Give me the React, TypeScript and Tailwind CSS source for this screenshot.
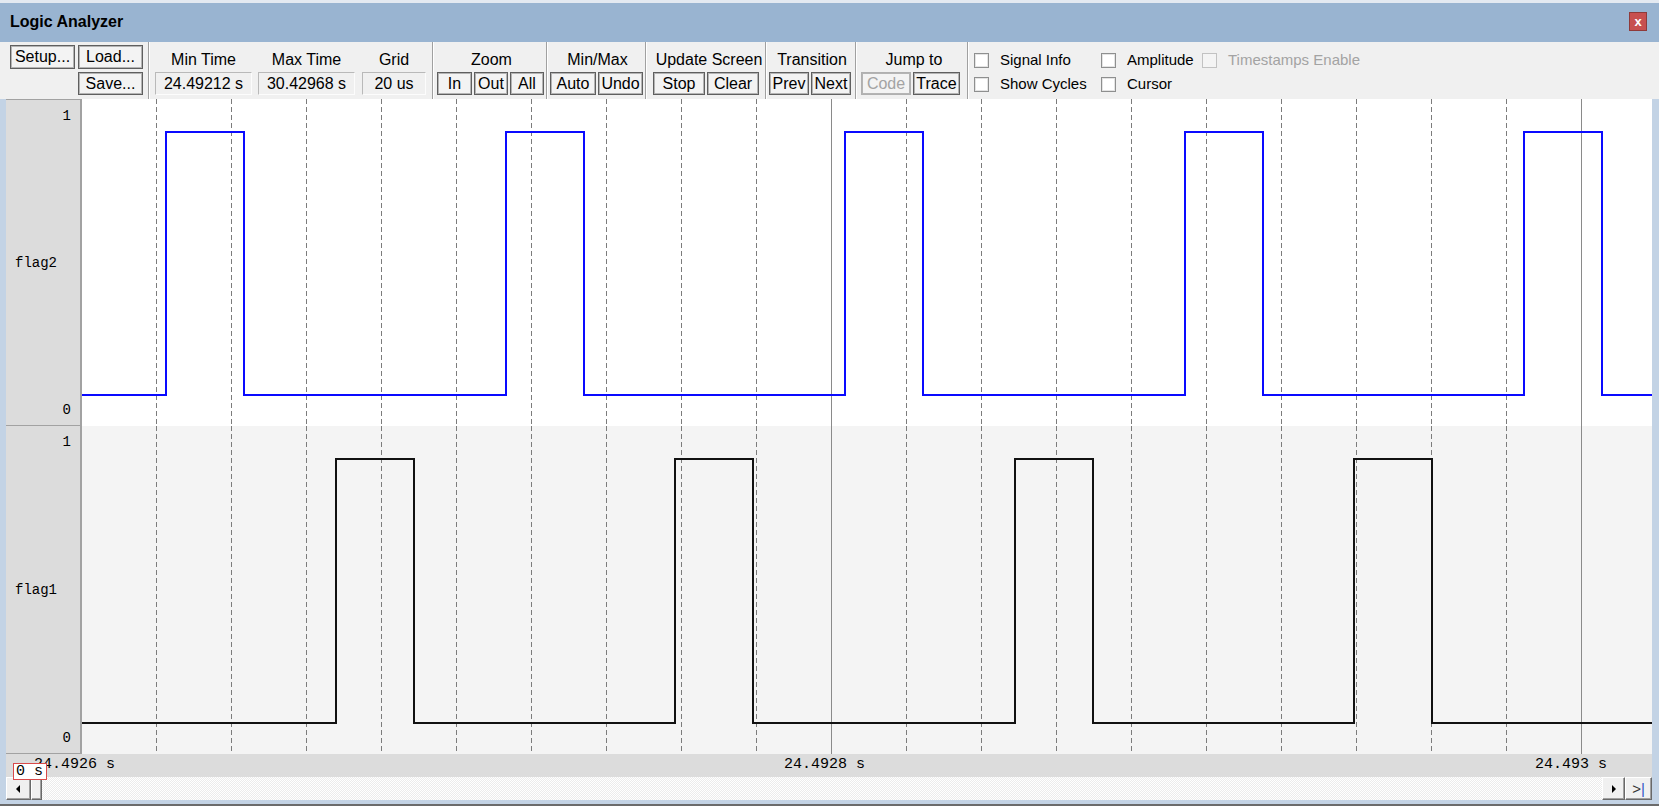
import React from "react";

const PLOT_W = 1570;
const FLAG2_H = 327;
const FLAG1_H = 328;

// grid every 20us = 75px, first line one step right of the plot's left edge
const GRID = Array.from({ length: 20 }, (_, i) => ({ x: 75 * (i + 1) - 0.5, cursor: i === 9 || i === 19 }));

function wave(rises: number[], width: number, hi: number, lo: number) {
  let d = `M0 ${lo}`;
  for (const r of rises) d += ` H${r} V${hi} H${r + width} V${lo}`;
  return d + ` H${PLOT_W}`;
}

const sans = "font-['Liberation_Sans',Arial,sans-serif]";
const mono = "font-['Liberation_Mono','Courier_New',monospace]";

const btn =
  "flex items-center justify-center bg-[#f3f3f3] border border-[#5f5f5f] shadow-[inset_0_0_0_1px_#b4b4b4] text-[16px] leading-none text-black";

function Btn({ label, w, h = 23, disabled }: { label: string; w: number; h?: number; disabled?: boolean }) {
  return (
    <div
      className={disabled ? btn.replace("border-[#5f5f5f]", "border-[#b0b0b0]") + " !text-[#a3a3a3]" : btn}
      style={{ width: w, height: h }}
    >
      {label}
    </div>
  );
}

function Sep() {
  return <div className="w-[2px] self-stretch border-l border-[#a0a0a0] border-r border-r-white" />;
}

function ValueBox({ label, value, w }: { label: string; value: string; w: number }) {
  return (
    <div className="flex flex-col items-center" style={{ width: w }}>
      <div className="h-[18px] leading-[18px] text-[16px] whitespace-nowrap">{label}</div>
      <div className="mt-[3px] h-[23px] w-full flex items-center justify-center bg-[#f0f0f0] border border-[#b9b9b9] border-b-[#fcfcfc] border-r-[#fcfcfc] text-[16px] leading-none">
        {value}
      </div>
    </div>
  );
}

function Group({ label, children, className }: { label: string; children: React.ReactNode; className?: string }) {
  return (
    <div className={"flex flex-col pt-[9px] " + (className ?? "")}>
      <div className="h-[18px] leading-[18px] text-[16px] text-center whitespace-nowrap">{label}</div>
      <div className="mt-[3px] flex gap-[2px]">{children}</div>
    </div>
  );
}

function Check({ label, disabled }: { label: string; disabled?: boolean }) {
  return (
    <div className="flex items-center h-[18px] gap-[11px] whitespace-nowrap">
      <div
        className={
          disabled
            ? "w-[15px] h-[15px] border border-[#c2c2c2] bg-[#f4f4f4]"
            : "w-[15px] h-[15px] border border-[#8e8f8f] bg-white shadow-[inset_0_0_0_1px_#e4e4e4]"
        }
      />
      <span className={"text-[15px] leading-[18px] " + (disabled ? "text-[#a3a3a3]" : "text-black")}>{label}</span>
    </div>
  );
}

function Toolbar() {
  return (
    <div className={"h-[57px] bg-[#f0f0f0] flex " + sans}>
      <div className="w-[148px] pl-[10px] pt-[3px] grid grid-cols-[65px_65px] gap-x-[3px] gap-y-[3px] content-start">
        <Btn label="Setup..." w={65} h={24} />
        <Btn label="Load..." w={65} h={24} />
        <div />
        <Btn label="Save..." w={65} />
      </div>
      <Sep />
      <div className="w-[282px] pl-[5px] pt-[9px] flex gap-[6px]">
        <ValueBox label="Min Time" value="24.49212 s" w={97} />
        <ValueBox label="Max Time" value="30.42968 s" w={97} />
        <div className="ml-[1px]">
          <ValueBox label="Grid" value="20 us" w={64} />
        </div>
      </div>
      <Sep />
      <Group label="Zoom" className="w-[112px] pl-[3px]">
        <Btn label="In" w={35} />
        <Btn label="Out" w={34} />
        <Btn label="All" w={34} />
      </Group>
      <Sep />
      <Group label="Min/Max" className="w-[97px] pl-[2px]">
        <Btn label="Auto" w={46} />
        <Btn label="Undo" w={45} />
      </Group>
      <Sep />
      <Group label="Update Screen" className="w-[118px] pl-[6px]">
        <Btn label="Stop" w={52} />
        <Btn label="Clear" w={52} />
      </Group>
      <Sep />
      <Group label="Transition" className="w-[88px] pl-[2px]">
        <Btn label="Prev" w={40} />
        <Btn label="Next" w={40} />
      </Group>
      <Sep />
      <Group label="Jump to" className="w-[110px] pl-[4px]">
        <Btn label="Code" w={50} disabled />
        <Btn label="Trace" w={47} />
      </Group>
      <Sep />
      <div className="pl-[5px] pt-[9px] grid grid-cols-[127px_101px_auto] gap-y-[6px] content-start">
        <Check label="Signal Info" />
        <Check label="Amplitude" />
        <Check label="Timestamps Enable" disabled />
        <Check label="Show Cycles" />
        <Check label="Cursor" />
      </div>
    </div>
  );
}

function GridLines({ h }: { h: number }) {
  return (
    <>
      {GRID.map((g) =>
        g.cursor ? (
          <line key={g.x} x1={g.x} x2={g.x} y1={0} y2={h} stroke="#8a8a8a" strokeWidth={1} />
        ) : (
          <line key={g.x} x1={g.x} x2={g.x} y1={0} y2={h} stroke="#7c7c7c" strokeWidth={1} strokeDasharray="5 3" />
        )
      )}
    </>
  );
}

function SignalRow({
  name,
  h,
  bg,
  d,
  color,
  top,
}: {
  name: string;
  h: number;
  bg: string;
  d: string;
  color: string;
  top?: boolean;
}) {
  return (
    <div className="flex" style={{ height: h }}>
      <div
        className={
          "w-[76px] bg-[#dcdcdc] border-r-2 border-r-[#a2a2a2] border-b border-b-[#a2a2a2] flex flex-col text-[14px] leading-[16px] text-black " +
          mono +
          (top ? " border-t border-t-[#a2a2a2]" : "")
        }
      >
        <div className="pt-[8px] pr-[9px] text-right">1</div>
        <div className="flex-1 flex items-center pl-[9px]">{name}</div>
        <div className="pb-[7px] pr-[9px] text-right">0</div>
      </div>
      <svg width={PLOT_W} height={h} className={bg} shapeRendering="crispEdges">
        <GridLines h={h} />
        <path d={d} fill="none" stroke={color} strokeWidth={2} />
      </svg>
    </div>
  );
}

function TimeAxis() {
  const labels = [
    { x: 28, t: "24.4926 s" },
    { x: 778, t: "24.4928 s" },
    { x: 1529, t: "24.493 s" },
  ];
  return (
    <div className={"relative h-[23px] bg-[#dcdcdc] text-[15px] leading-[18px] text-black " + mono}>
      {labels.map((l) => (
        <span key={l.t} className="absolute top-[2px] whitespace-nowrap" style={{ left: l.x }}>
          {l.t}
        </span>
      ))}
      <div className="absolute left-[7px] top-[9px] z-10 w-[34px] h-[17px] bg-white border border-[#d94a4a] pl-[2px] text-[15px] leading-[15px] whitespace-nowrap">
        0 s
      </div>
    </div>
  );
}

const raised =
  "bg-[#f0f0f0] border border-t-white border-l-white border-b-[#696969] border-r-[#696969] shadow-[inset_-1px_-1px_0_#a0a0a0]";

function ScrollBar() {
  return (
    <div className="h-[23px] flex bg-[#f4f4f4]">
      <div className={"w-[25px] flex items-center justify-center " + raised}>
        <svg width="5" height="8" viewBox="0 0 5 8">
          <polygon points="4,0 0,4 4,8" fill="#000" />
        </svg>
      </div>
      <div className={"w-[11px] " + raised} />
      <div className="flex-1 bg-[repeating-conic-gradient(#ffffff_0_25%,#ececec_0_50%)] bg-[length:2px_2px]" />
      <div className={"w-[23px] flex items-center justify-center " + raised}>
        <svg width="5" height="8" viewBox="0 0 5 8">
          <polygon points="1,0 5,4 1,8" fill="#000" />
        </svg>
      </div>
      <div className={"w-[27px] flex items-center justify-center text-[15px] leading-none " + raised + " " + sans}>
        <span className="text-[#333]">&gt;</span>
        <span className="text-[#2f55c8]">|</span>
      </div>
    </div>
  );
}

export default function App() {
  const flag2 = wave([84, 424, 763, 1103, 1442], 78, 33, 296);
  const flag1 = wave([254, 593, 933, 1272], 78, 33, 297);

  return (
    <div className="w-[1659px] h-[806px] flex flex-col bg-[#c3d3e5] overflow-hidden">
      {/* title bar */}
      <div className="h-[3px] bg-[#e3e9f1]" />
      <div className={"h-[39px] bg-[#99b4d1] flex justify-between pl-[10px] pr-[12px] " + sans}>
        <div className="mt-[10px] text-[16px] leading-[18px] font-bold text-black">Logic Analyzer</div>
        <div className="mt-[9px] w-[18px] h-[19px] bg-[#c75050] border border-[#8f3a3a] flex items-center justify-center text-white text-[13px] font-bold leading-none">
          x
        </div>
      </div>

      <Toolbar />

      <div className="pl-[6px] pr-[7px] flex flex-col">
        <SignalRow name="flag2" h={FLAG2_H} bg="bg-white" d={flag2} color="#0a0aff" top />
        <SignalRow name="flag1" h={FLAG1_H} bg="bg-[#f4f4f4]" d={flag1} color="#111111" />
        <TimeAxis />
        <ScrollBar />
      </div>
      <div className="h-[4px]" />
      <div className="h-[2px] bg-[#6b6b6b]" />
    </div>
  );
}
